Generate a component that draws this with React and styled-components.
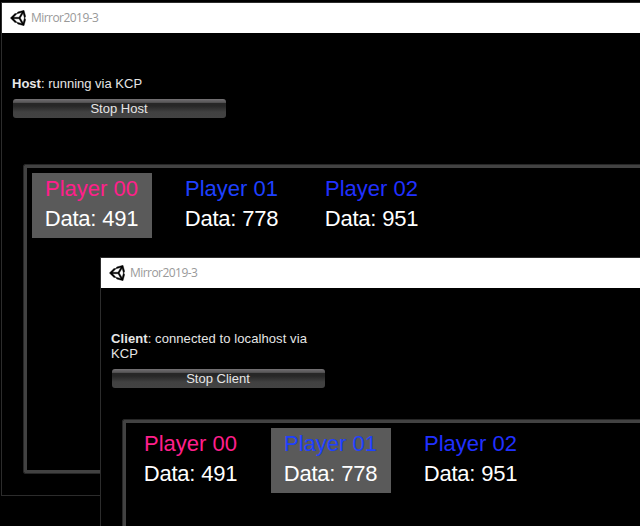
import React from "react";
import styled, { createGlobalStyle } from "styled-components";

const GlobalStyle = createGlobalStyle`
  html, body { margin: 0; background: #000; overflow: hidden; }
  * { box-sizing: border-box; }
`;

const Desktop = styled.main`
  position: relative;
  width: 640px;
  height: 526px;
  overflow: hidden;
  background: #000;
  font-family: "Liberation Sans", Arial, sans-serif;
`;

const Window = styled.section`
  position: absolute;
  left: ${(p) => p.$x}px;
  top: ${(p) => p.$y}px;
  width: 700px;
  height: 494px;
  display: flex;
  flex-direction: column;
  background: #000;
  border: 1px solid #2c2c2c;
`;

const TitleBar = styled.header`
  flex: none;
  display: flex;
  align-items: center;
  height: 30px;
  padding-left: 8px;
  gap: 5px;
  background: #fff;
`;

const Logo = styled.svg`
  flex: none;
  width: 16px;
  height: 16px;
  margin-top: -1px;
`;

const Title = styled.span`
  font: 12px/16px "Open Sans", "Noto Sans", sans-serif;
  letter-spacing: -0.55px;
  color: #999;
`;

const Controls = styled.div`
  flex: none;
  display: flex;
  flex-direction: column;
  width: 214px;
  margin: 43px 0 0 10px;
`;

const Status = styled.p`
  margin: 0 0 8px;
  font-size: 13px;
  line-height: 15px;
  letter-spacing: ${(p) => p.$tracking}px;
  color: #e6e6e6;
`;

const StopButton = styled.button`
  height: 19px;
  width: 213px;
  margin: 0 0 0 1px;
  padding: 0 1px 0 0;
  border: 0;
  border-radius: 3px;
  background: linear-gradient(#777576 0, #69676a 1px, #5a595a 3px, #4a494a 4px, #272727 4px, #272727 7px, #343434 10px, #414141 13px, #434343 100%);
  font: 13px/19px "Liberation Sans", Arial, sans-serif;
  color: #e6e6e6;
`;

const Panel = styled.div`
  flex: none;
  display: flex;
  align-items: flex-start;
  gap: 20px;
  width: 660px;
  height: 310px;
  margin: ${(p) => p.$top}px 0 0 21px;
  padding: 8px;
  border: 1px solid #272727;
  border-radius: 2px;
  box-shadow: inset 0 0 0 3px #424242;
`;

const PlayerCard = styled.div`
  width: 120px;
  height: 65px;
  padding: 1px 1px 0 0;
  text-align: center;
  font-size: 22px;
  line-height: 30px;
  white-space: nowrap;
  color: #fff;
  background: ${(p) => (p.$active ? "#5a5a5a" : "transparent")};
`;

const PlayerName = styled.div`
  color: ${(p) => p.$color};
`;

const PlayerData = styled.div`
  letter-spacing: -0.2px;
`;

const players = [
  { name: "Player 00", data: 491, color: "#ff1f8b" },
  { name: "Player 01", data: 778, color: "#1e40ff" },
  { name: "Player 02", data: 951, color: "#2030ff" },
];

function UnityIcon() {
  return (
    <Logo viewBox="8 4 496 504">
      <path
        stroke="#000"
        strokeWidth="12"
        d="M498.11 206.4 445.31 14.72 248.2 66.08 219 116.14l-59.2-.43L15.54 256 159.82 396.32l59.17-.43 29.24 50 197.08 51.36 52.8-191.62-30-49.63zM223.77 124.2 374.55 86.51 288 232.33H114.87zm0 263.63L114.87 279.71H288l86.55 145.81zm193 14L330.17 256l86.58-145.84L458.56 256z"
      />
    </Logo>
  );
}

function GameWindow({ x, y, role, status, button, active, tracking, panelTop }) {
  return (
    <Window $x={x} $y={y}>
      <TitleBar>
        <UnityIcon />
        <Title>Mirror2019-3</Title>
      </TitleBar>
      <Controls>
        <Status $tracking={tracking}><b>{role}</b>: {status}</Status>
        <StopButton>{button}</StopButton>
      </Controls>
      <Panel $top={panelTop}>
        {players.map((p, i) => (
          <PlayerCard key={p.name} $active={i === active}>
            <PlayerName $color={p.color}>{p.name}</PlayerName>
            <PlayerData>Data: {p.data}</PlayerData>
          </PlayerCard>
        ))}
      </Panel>
    </Window>
  );
}

export default function App() {
  return (
    <>
      <GlobalStyle />
      <Desktop>
        <GameWindow x={1} y={2} role="Host" status="running via KCP" button="Stop Host" active={0} tracking={0} panelTop={46} />
        <GameWindow x={100} y={257} role="Client" status="connected to localhost via KCP" button="Stop Client" active={1} tracking={0.09} panelTop={31} />
      </Desktop>
    </>
  );
}
